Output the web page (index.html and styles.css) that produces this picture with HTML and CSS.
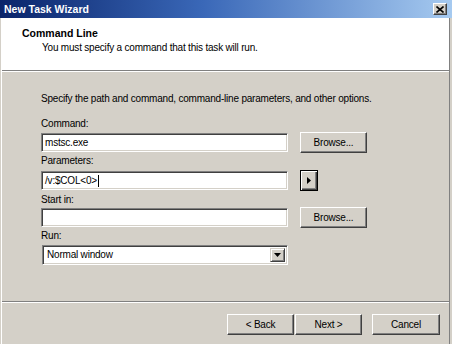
FILE: index.html
```html
<!DOCTYPE html>
<html>
<head>
<meta charset="utf-8">
<link rel="stylesheet" href="styles.css">
</head>
<body>
<div class="window">
  <div class="titlebar">
    <span class="title">New Task Wizard</span>
    <div class="close">
      <svg width="8" height="7" viewBox="0 0 8 7"><path d="M0.5 0.5 L7.5 6.5 M7.5 0.5 L0.5 6.5" stroke="#000" stroke-width="1.6" fill="none"/></svg>
    </div>
  </div>
  <div class="frame">
    <div class="header">
      <div class="h-title">Command Line</div>
      <div class="h-sub">You must specify a command that this task will run.</div>
    </div>
    <div class="content">
      <div class="intro">Specify the path and command, command-line parameters, and other options.</div>
      <div class="lbl lbl-command">Command:</div>
      <div class="row row-command">
        <div class="field">mstsc.exe</div>
        <div class="btn browse">Browse...</div>
      </div>
      <div class="lbl lbl-params">Parameters:</div>
      <div class="row row-params">
        <div class="field">/v:$COL&lt;0&gt;<span class="caret"></span></div>
        <div class="btn arrow-btn"><svg width="4" height="7" viewBox="0 0 4 7"><path d="M0 0 L4 3.5 L0 7 Z" fill="#000"/></svg></div>
      </div>
      <div class="lbl lbl-start">Start in:</div>
      <div class="row row-start">
        <div class="field"></div>
        <div class="btn browse">Browse...</div>
      </div>
      <div class="lbl lbl-run">Run:</div>
      <div class="select">
        <span class="sel-text">Normal window</span>
        <div class="drop"><svg width="7" height="4" viewBox="0 0 7 4"><path d="M0 0 L7 0 L3.5 4 Z" fill="#000"/></svg></div>
      </div>
    </div>
    <div class="footer">
      <div class="btn nav">&lt; Back</div>
      <div class="btn nav next">Next &gt;</div>
      <div class="btn nav cancel">Cancel</div>
    </div>
  </div>
</div>
</body>
</html>
```
FILE: styles.css
```css
html, body {
  margin: 0;
  padding: 0;
}
body {
  width: 452px;
  height: 344px;
  overflow: hidden;
  font-family: "Liberation Sans", Arial, sans-serif;
  font-size: 10px;
  letter-spacing: -0.2px;
  color: #000;
  background: #d4d0c8;
}
.window {
  width: 452px;
  height: 344px;
  display: flex;
  flex-direction: column;
  background: #d4d0c8;
}
.titlebar {
  height: 18px;
  flex: none;
  display: flex;
  align-items: center;
  justify-content: space-between;
  background: linear-gradient(to right, #0a246a 0%, #3a68b8 45%, #a6caf0 100%);
}
.title {
  color: #fff;
  font-weight: bold;
  font-size: 10.5px;
  letter-spacing: 0;
  padding-left: 4px;
  line-height: 18px;
}
.close {
  width: 12px;
  height: 10px;
  margin-right: 5px;
  background: #d4d0c8;
  border: 1px solid;
  border-color: #fff #404040 #404040 #fff;
  box-shadow: inset -1px -1px #808080;
  display: flex;
  align-items: center;
  justify-content: center;
}
.frame {
  flex: 1;
  display: flex;
  flex-direction: column;
  border-left: 1px solid #fff;
  border-right: 1px solid #808080;
  box-shadow: -1px 0 #d4d0c8, 1px 0 #d4d0c8;
  margin: 0 2px 0 1px;
}
.header {
  height: 53px;
  flex: none;
  background: #fff;
  border-bottom: 1px solid #808080;
  box-shadow: 0 1px #fff;
  box-sizing: border-box;
  padding-top: 9px;
}
.h-title {
  font-weight: bold;
  font-size: 10.5px;
  letter-spacing: 0;
  line-height: 13px;
  padding-left: 20px;
}
.h-sub {
  line-height: 13px;
  padding-left: 40px;
  margin-top: 1px;
}
.content {
  flex: 1;
  padding: 21px 0 0 39px;
  display: flex;
  flex-direction: column;
  align-items: flex-start;
}
.intro {
  line-height: 13px;
  height: 13px;
}
.lbl {
  line-height: 13px;
  height: 13px;
}
.lbl-command { margin-top: 12px; }
.lbl-params { margin-top: 1px; }
.lbl-start { margin-top: 2px; }
.lbl-run { margin-top: 1px; }
.row {
  display: flex;
  gap: 12px;
  height: 21px;
  align-items: flex-start;
}
.row-command { margin-top: 2px; }
.row-params { margin-top: 3px; }
.row-start { margin-top: 1px; }
.field {
  width: 247px;
  height: 19px;
  box-sizing: border-box;
  margin-top: 1px;
  background: #fff;
  border: 1px solid;
  border-color: #808080 #fff #fff #808080;
  box-shadow: inset 1px 1px #404040, inset -1px -1px #d4d0c8;
  padding-left: 3px;
  line-height: 17px;
  display: flex;
  align-items: center;
}
.caret {
  display: inline-block;
  width: 1px;
  height: 12px;
  background: #000;
  margin-left: 1px;
}
.btn {
  box-sizing: border-box;
  height: 21px;
  background: #d4d0c8;
  border: 1px solid;
  border-color: #fff #404040 #404040 #fff;
  box-shadow: inset -1px -1px #808080;
  display: flex;
  align-items: center;
  justify-content: center;
  line-height: 13px;
}
.browse {
  width: 67px;
}
.arrow-btn {
  width: 18px;
  border: 1px solid #000;
  box-shadow: inset 1px 1px #fff, inset -1px -1px #404040, inset -2px -2px #808080;
}
.select {
  margin-top: 3px;
  margin-left: 1px;
  width: 246px;
  height: 20px;
  box-sizing: border-box;
  background: #fff;
  border: 1px solid;
  border-color: #808080 #fff #fff #808080;
  box-shadow: inset 1px 1px #404040, inset -1px -1px #d4d0c8;
  display: flex;
  align-items: center;
  justify-content: space-between;
  padding: 2px 2px 2px 4px;
}
.sel-text {
  line-height: 14px;
}
.drop {
  width: 15px;
  height: 14px;
  box-sizing: border-box;
  background: #d4d0c8;
  border: 1px solid;
  border-color: #d4d0c8 #404040 #404040 #d4d0c8;
  box-shadow: inset 1px 1px #fff, inset -1px -1px #808080;
  display: flex;
  align-items: center;
  justify-content: center;
}
.footer {
  height: 43px;
  flex: none;
  box-sizing: border-box;
  border-top: 1px solid #808080;
  box-shadow: inset 0 1px #fff;
  display: flex;
  justify-content: flex-end;
  align-items: flex-start;
  padding: 12px 9px 0 0;
}
.nav {
  width: 67px;
}
.next {
  margin-left: 1px;
}
.cancel {
  width: 68px;
  margin-left: 10px;
}
```
